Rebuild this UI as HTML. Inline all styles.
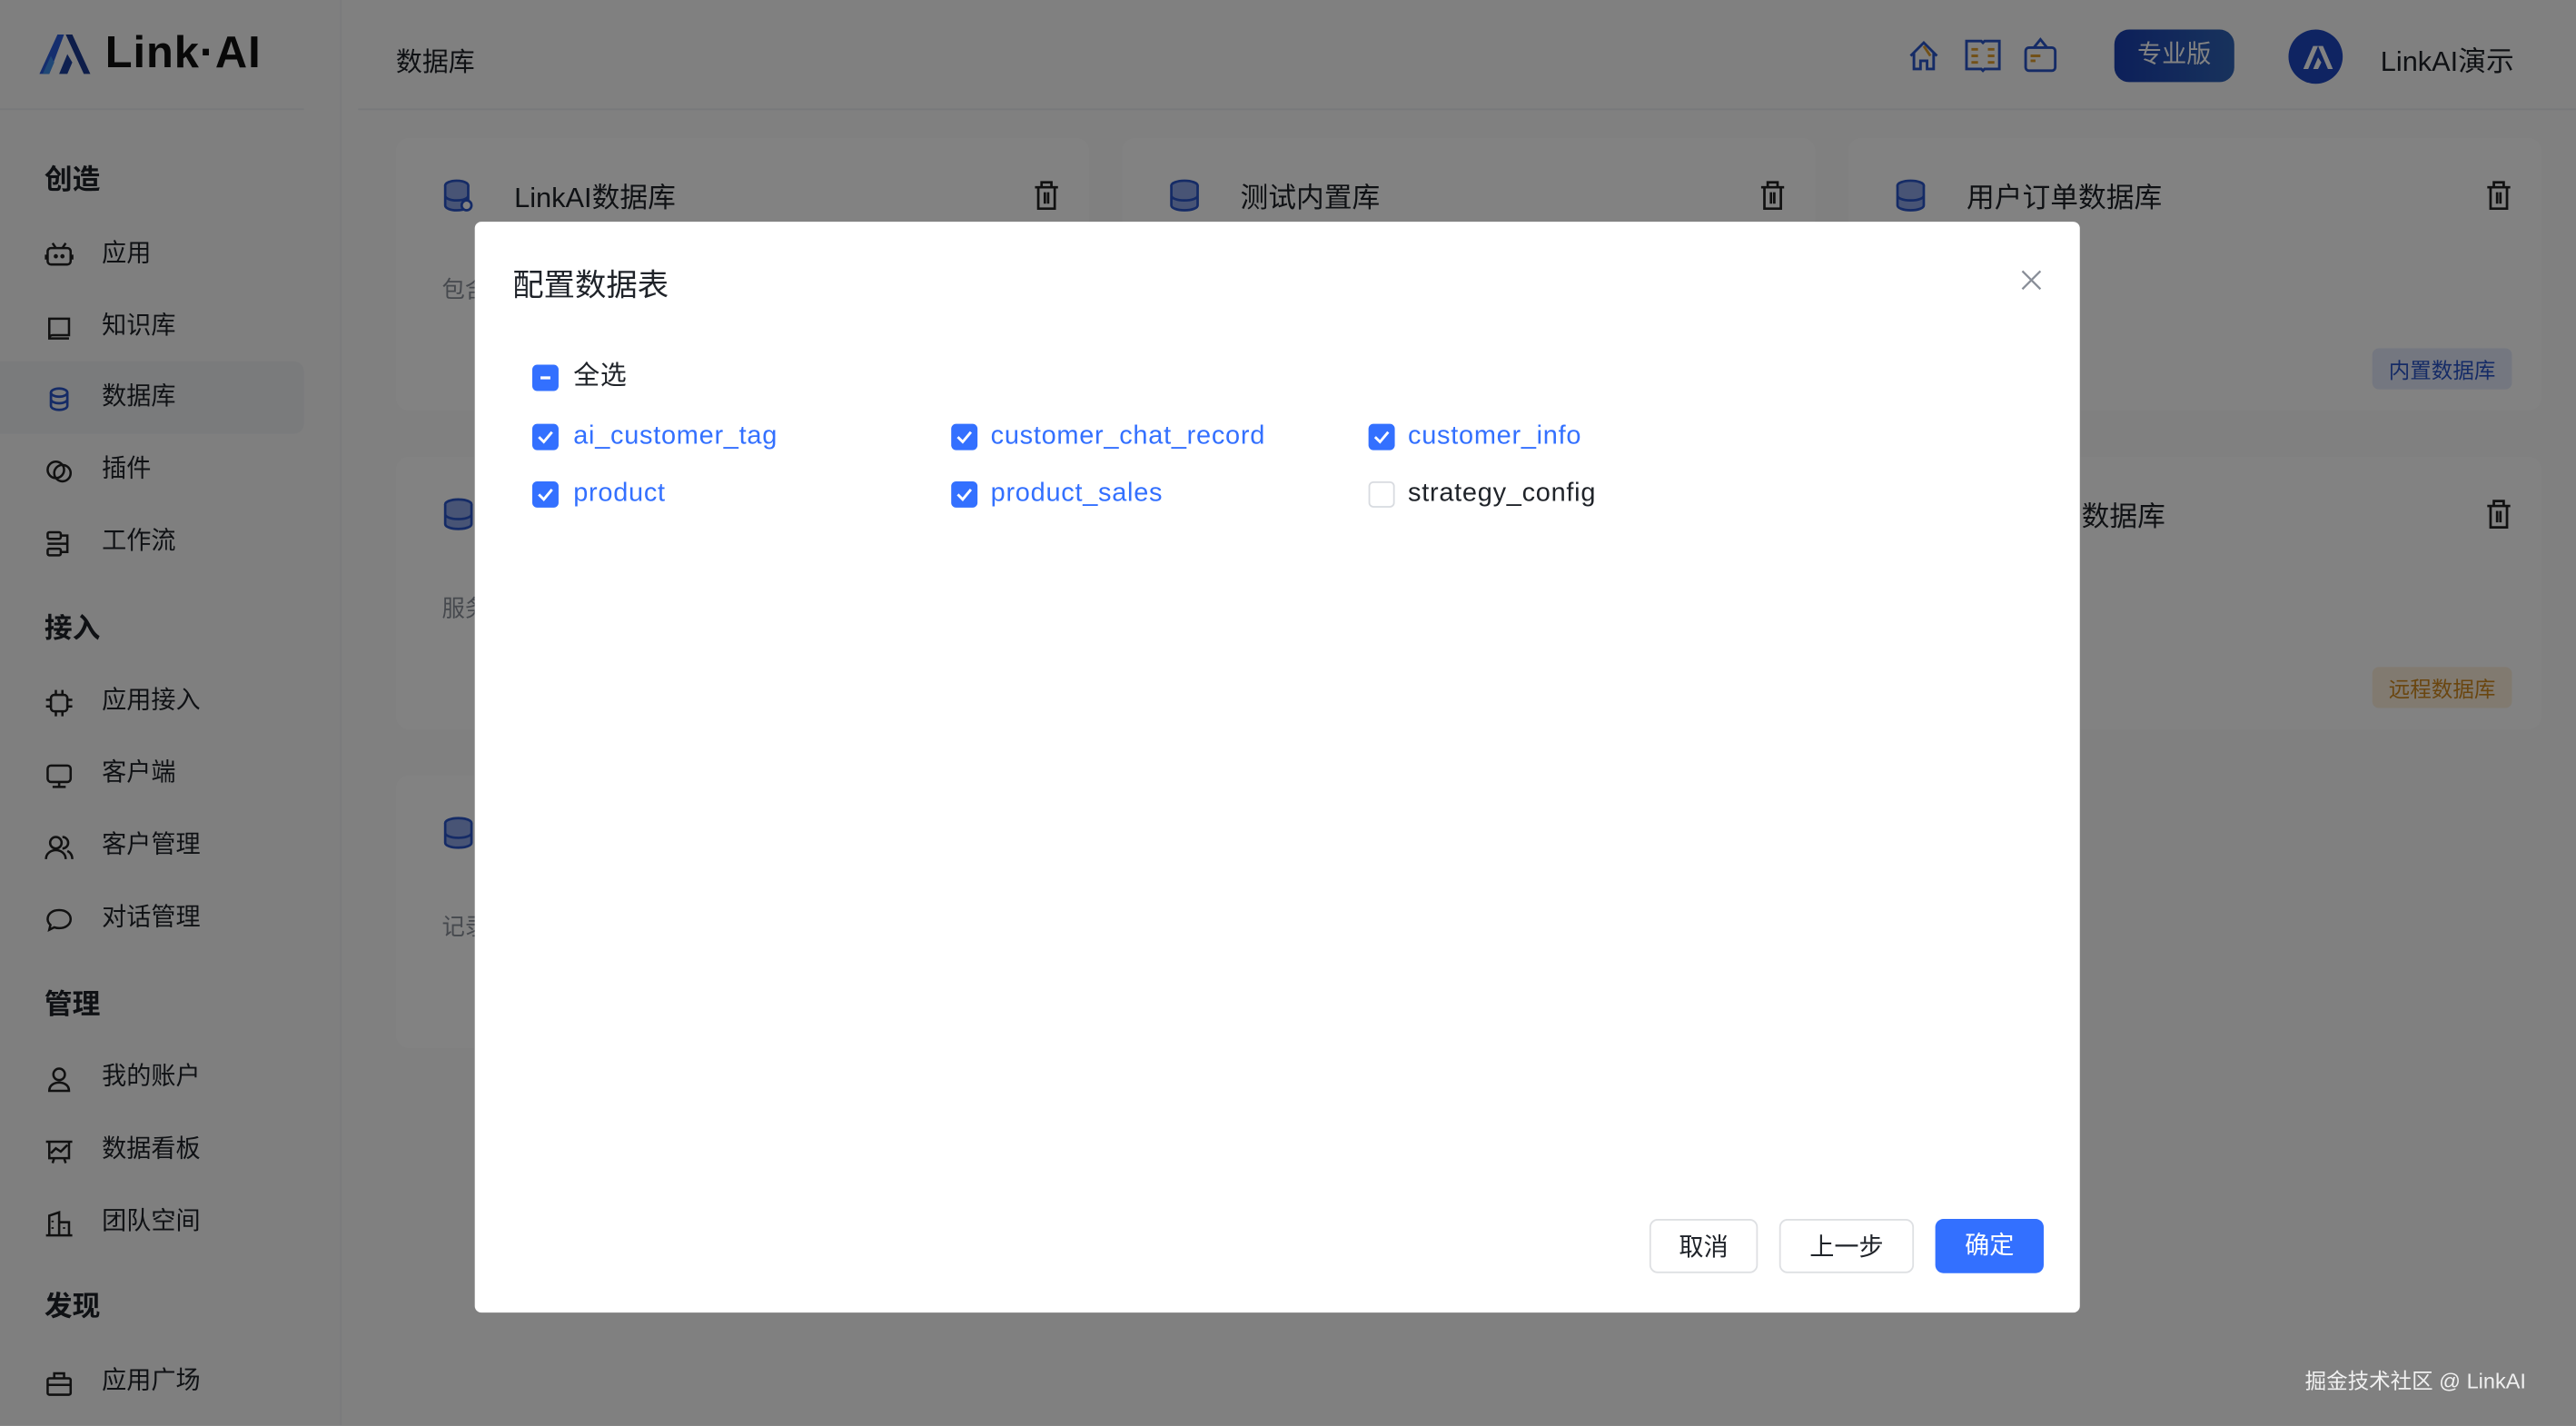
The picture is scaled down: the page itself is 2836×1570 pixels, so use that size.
<!DOCTYPE html>
<html><head><meta charset="utf-8"><style>
html,body{margin:0;padding:0;width:2836px;height:1570px;overflow:hidden;background:#7f7f7f}
#root{position:absolute;left:0;top:0;width:1568px;height:868px;transform:scale(1.80867);transform-origin:0 0;background:#fbfbfc;font-family:"Liberation Sans","Noto Sans CJK SC",sans-serif;color:#1f2329}
.abs{position:absolute}
.side{left:0;top:0;width:207px;height:868px;background:#f9f9fa;border-right:1px solid #f0f1f3}
.sec{position:absolute;left:27px;font-size:17px;font-weight:bold;color:#1f2329}
.it{position:absolute;left:27px;font-size:15px;color:#1f2329;height:20px;line-height:20px}
.it svg{position:absolute;left:0;top:2px}
.it span{position:absolute;left:35px;white-space:nowrap}
.card{position:absolute;background:#fff;border-radius:8px;width:422px;height:166px}
.ct{position:absolute;left:72px;top:22px;font-size:17px}
.cd{position:absolute;left:28px;top:82px;font-size:14px;color:#8a8f99}
.dbi{position:absolute;left:28px;top:24px}
.tr{position:absolute;right:18px;top:26px}
.tag{position:absolute;right:18px;top:128px;font-size:13px;padding:3px 10px;border-radius:4px}
.ov{left:0;top:0;width:1568px;height:868px;background:rgba(0,0,0,.49)}
.modal{left:289px;top:135px;width:977px;height:664px;background:#fff;border-radius:4px}
.cb{position:absolute;width:16px;height:16px;border-radius:3px;background:#3370ff}
.cb svg{position:absolute;left:0;top:0}
.lb{position:absolute;font-size:16px;letter-spacing:0.4px;color:#3370ff;white-space:nowrap;line-height:20px}
.btn{position:absolute;top:607px;height:33px;line-height:33px;text-align:center;font-size:15px;border-radius:5px;box-sizing:border-box}
</style></head><body><div id="root">

<div class="abs side">
 <svg class="abs" style="left:24px;top:20px" width="34" height="26" viewBox="0 0 34 26"><path d="M0 25 L11 1 L15 1 L6 25Z" fill="#2a5bd7"/><path d="M12 25 L17 13 L20 18 L17 25Z" fill="#1c3f9e"/><path d="M16 1 L20 1 L31 25 L27 25Z" fill="#1d3a8f"/><path d="M2 25 L7 14 L9 18 L6 25Z" fill="#3f8ee8"/></svg>
 <div class="abs" style="left:64px;top:17px;font-size:27px;font-weight:bold;letter-spacing:0.5px;color:#111">Link·AI</div>
 <div class="abs" style="left:0;top:66px;width:185px;height:1px;background:#eceef1"></div>
 <div class="sec" style="top:95px">创造</div>
 <div class="it" style="top:145px"><svg width="18" height="16" viewBox="0 0 18 16" fill="none" stroke="#222" stroke-width="1.4"><rect x="2" y="4" width="14" height="10" rx="2"/><path d="M5 1l2 3M13 1l-2 3M1 8v3M17 8v3"/><circle cx="7" cy="9" r=".6" fill="#222"/><circle cx="11" cy="9" r=".6" fill="#222"/></svg><span>应用</span></div>
 <div class="it" style="top:189px"><svg width="18" height="18" viewBox="0 0 18 18" fill="none" stroke="#222" stroke-width="1.4"><path d="M3 15V3h12v10H5a2 2 0 0 0-2 2h12"/></svg><span>知识库</span></div>
 <div class="abs" style="left:0;top:220px;width:185px;height:44px;background:#f0f1f4;border-radius:0 6px 6px 0"></div>
 <div class="it" style="top:232px"><svg width="18" height="18" viewBox="0 0 18 18" fill="none" stroke="#2a55c8" stroke-width="1.5"><ellipse cx="9" cy="5" rx="5" ry="2.5"/><path d="M4 5v8c0 1.4 2.2 2.5 5 2.5s5-1.1 5-2.5V5M4 9c0 1.4 2.2 2.5 5 2.5s5-1.1 5-2.5"/></svg><span>数据库</span></div>
 <div class="it" style="top:276px"><svg width="18" height="18" viewBox="0 0 18 18" fill="none" stroke="#222" stroke-width="1.4"><circle cx="7" cy="8" r="5"/><circle cx="11" cy="10" r="5"/></svg><span>插件</span></div>
 <div class="it" style="top:320px"><svg width="18" height="18" viewBox="0 0 18 18" fill="none" stroke="#222" stroke-width="1.4"><rect x="2" y="2" width="8" height="4" rx="1"/><rect x="2" y="12" width="8" height="4" rx="1"/><path d="M10 4h4v10h-4M2 9h12"/></svg><span>工作流</span></div>
 <div class="sec" style="top:368px">接入</div>
 <div class="it" style="top:417px"><svg width="18" height="18" viewBox="0 0 18 18" fill="none" stroke="#222" stroke-width="1.4"><rect x="4" y="4" width="10" height="10" rx="2"/><path d="M1 7h3M1 11h3M14 7h3M14 11h3M7 1v3M11 1v3M7 14v3M11 14v3"/></svg><span>应用接入</span></div>
 <div class="it" style="top:461px"><svg width="18" height="18" viewBox="0 0 18 18" fill="none" stroke="#222" stroke-width="1.4"><rect x="2" y="3" width="14" height="10" rx="2"/><path d="M9 13v3M5 16h8"/></svg><span>客户端</span></div>
 <div class="it" style="top:505px"><svg width="18" height="18" viewBox="0 0 18 18" fill="none" stroke="#222" stroke-width="1.4"><circle cx="7" cy="6" r="3.5"/><path d="M1 16c0-3.5 3-5.5 6-5.5s6 2 6 5.5M11 2.5a3.5 3.5 0 0 1 0 7M14 11c2 1 3 2.5 3 5"/></svg><span>客户管理</span></div>
 <div class="it" style="top:549px"><svg width="18" height="18" viewBox="0 0 18 18" fill="none" stroke="#222" stroke-width="1.4"><path d="M9 3c4.4 0 7 2.5 7 5.5S13.4 14 9 14c-1 0-2-.2-3-.5L3 15l.7-3C2.6 11 2 9.8 2 8.5 2 5.5 4.6 3 9 3z"/></svg><span>对话管理</span></div>
 <div class="sec" style="top:597px">管理</div>
 <div class="it" style="top:646px"><svg width="18" height="18" viewBox="0 0 18 18" fill="none" stroke="#222" stroke-width="1.4"><circle cx="9" cy="6" r="3.5"/><path d="M3 16c0-3.5 3-5 6-5s6 1.5 6 5z"/></svg><span>我的账户</span></div>
 <div class="it" style="top:690px"><svg width="18" height="18" viewBox="0 0 18 18" fill="none" stroke="#222" stroke-width="1.4"><path d="M1 3h16M3 3v10h12V3M4 10l3-3 3 2 4-4M6 13l-1 3M12 13l1 3"/></svg><span>数据看板</span></div>
 <div class="it" style="top:734px"><svg width="18" height="18" viewBox="0 0 18 18" fill="none" stroke="#222" stroke-width="1.4"><path d="M1 16h16M3 16V4l6-2v14M9 8h6v8M5 7v1M5 11v1M12 11v1"/></svg><span>团队空间</span></div>
 <div class="sec" style="top:781px">发现</div>
 <div class="it" style="top:831px"><svg width="18" height="18" viewBox="0 0 18 18" fill="none" stroke="#222" stroke-width="1.4"><rect x="2" y="6" width="14" height="10" rx="1"/><path d="M6 6V3h6v3M2 10h14"/></svg><span>应用广场</span></div>
</div>

<div class="abs" style="left:241px;top:24px;font-size:16px">数据库</div>
<svg class="abs" style="left:1160px;top:23px" width="22" height="22" viewBox="0 0 22 22" fill="none" stroke="#2a55c8" stroke-width="1.6"><path d="M3 11L11 3l8 8M5 9v10h4v-5h4v5h4V9"/><path d="M11 5l4 6" stroke="#e0a030"/></svg>
<svg class="abs" style="left:1195px;top:23px" width="24" height="22" viewBox="0 0 24 22" fill="none" stroke-width="1.6"><path d="M2 2h9l1 1 1-1h9v17h-9l-1 1-1-1H2z" stroke="#2a55c8"/><path d="M5 7h4M5 11h4M5 15h4M15 7h4M15 11h4M15 15h4" stroke="#e0a030"/></svg>
<svg class="abs" style="left:1231px;top:22px" width="22" height="24" viewBox="0 0 22 24" fill="none" stroke-width="1.6"><rect x="2" y="7" width="18" height="14" rx="2" stroke="#2a55c8"/><path d="M7 7l4-5 4 5" stroke="#2a55c8"/><path d="M5 12h6M5 15h3" stroke="#e0a030"/></svg>
<div class="abs" style="left:1287px;top:18px;width:73px;height:32px;border-radius:9px;background:linear-gradient(90deg,#1a3fb0,#2f63b5);color:#fff;font-size:15px;text-align:center;line-height:32px">专业版</div>
<div class="abs" style="left:1393px;top:18px;width:33px;height:33px;border-radius:50%;background:#1e47c0"><svg width="33" height="33" viewBox="0 0 33 33"><path d="M9 24L15 10h3L12 24z M15 24l3-7 2 3-2 4z M18 10h3l6 14h-3z" fill="#fff"/></svg></div>
<div class="abs" style="left:1449px;top:23px;font-size:17px">LinkAI演示</div>
<div class="abs" style="left:218px;top:66px;width:1350px;height:1px;background:#eceef1"></div>

<div class="card" style="left:241px;top:84px"><svg class="dbi" width="20" height="22" viewBox="0 0 20 22" fill="#8da6e6" stroke="#2a55c8" stroke-width="1.5"><ellipse cx="9" cy="5" rx="7" ry="3"/><path d="M2 5v12c0 1.7 3 3 7 3s7-1.3 7-3V5M2 11c0 1.7 3 3 7 3s7-1.3 7-3"/><circle cx="15" cy="17" r="3" fill="#fff"/></svg><div class="ct">LinkAI数据库</div><svg class="tr" width="16" height="18" viewBox="0 0 16 18" fill="none" stroke="#222" stroke-width="1.5"><path d="M1 4h14M5 4V1h6v3M3 4v13h10V4M7 7v7M9 7v7"/></svg><div class="cd">包含</div></div>
<div class="card" style="left:683px;top:84px"><svg class="dbi" width="20" height="22" viewBox="0 0 20 22" fill="#8da6e6" stroke="#2a55c8" stroke-width="1.5"><ellipse cx="10" cy="5" rx="8" ry="3"/><path d="M2 5v12c0 1.7 3.6 3 8 3s8-1.3 8-3V5M2 11c0 1.7 3.6 3 8 3s8-1.3 8-3"/></svg><div class="ct">测试内置库</div><svg class="tr" width="16" height="18" viewBox="0 0 16 18" fill="none" stroke="#222" stroke-width="1.5"><path d="M1 4h14M5 4V1h6v3M3 4v13h10V4M7 7v7M9 7v7"/></svg></div>
<div class="card" style="left:1125px;top:84px"><svg class="dbi" width="20" height="22" viewBox="0 0 20 22" fill="#8da6e6" stroke="#2a55c8" stroke-width="1.5"><ellipse cx="10" cy="5" rx="8" ry="3"/><path d="M2 5v12c0 1.7 3.6 3 8 3s8-1.3 8-3V5M2 11c0 1.7 3.6 3 8 3s8-1.3 8-3"/></svg><div class="ct">用户订单数据库</div><svg class="tr" width="16" height="18" viewBox="0 0 16 18" fill="none" stroke="#222" stroke-width="1.5"><path d="M1 4h14M5 4V1h6v3M3 4v13h10V4M7 7v7M9 7v7"/></svg><div class="cd">数据</div><div class="tag" style="background:#e3eafc;color:#2a55c8">内置数据库</div></div>
<div class="card" style="left:241px;top:278px"><svg class="dbi" width="20" height="22" viewBox="0 0 20 22" fill="#8da6e6" stroke="#2a55c8" stroke-width="1.5"><ellipse cx="10" cy="5" rx="8" ry="3"/><path d="M2 5v12c0 1.7 3.6 3 8 3s8-1.3 8-3V5M2 11c0 1.7 3.6 3 8 3s8-1.3 8-3"/></svg><div class="cd">服务</div></div>
<div class="card" style="left:683px;top:278px"></div>
<div class="card" style="left:1125px;top:278px"><div class="ct" style="left:142px">数据库</div><svg class="tr" width="16" height="18" viewBox="0 0 16 18" fill="none" stroke="#222" stroke-width="1.5"><path d="M1 4h14M5 4V1h6v3M3 4v13h10V4M7 7v7M9 7v7"/></svg><div class="tag" style="background:#fdf0dc;color:#d08a20">远程数据库</div></div>
<div class="card" style="left:241px;top:472px"><svg class="dbi" width="20" height="22" viewBox="0 0 20 22" fill="#8da6e6" stroke="#2a55c8" stroke-width="1.5"><ellipse cx="10" cy="5" rx="8" ry="3"/><path d="M2 5v12c0 1.7 3.6 3 8 3s8-1.3 8-3V5M2 11c0 1.7 3.6 3 8 3s8-1.3 8-3"/></svg><div class="cd">记录</div></div>

<div class="abs ov"></div>
<div class="abs" style="left:1403px;top:830px;font-size:13px;color:#f0f0f0">掘金技术社区 @ LinkAI</div>

<div class="abs modal">
 <div class="abs" style="left:23px;top:24px;font-size:19px;color:#1f2329">配置数据表</div>
 <svg class="abs" style="left:941px;top:29px" width="13" height="13" viewBox="0 0 13 13" stroke="#8a8f99" stroke-width="1.3"><path d="M1 1l11 11M12 1L1 12"/></svg>
 <div class="cb" style="left:35px;top:87px"><svg width="16" height="16"><path d="M5 8h6" stroke="#fff" stroke-width="1.8"/></svg></div><div class="lb" style="left:60px;top:85px;color:#1f2329">全选</div>
 <div class="cb" style="left:35px;top:123px"><svg width="16" height="16"><path d="M4 8l3 3 5-6" stroke="#fff" stroke-width="1.6" fill="none"/></svg></div><div class="lb" style="left:60px;top:121px">ai_customer_tag</div>
 <div class="cb" style="left:290px;top:123px"><svg width="16" height="16"><path d="M4 8l3 3 5-6" stroke="#fff" stroke-width="1.6" fill="none"/></svg></div><div class="lb" style="left:314px;top:121px">customer_chat_record</div>
 <div class="cb" style="left:544px;top:123px"><svg width="16" height="16"><path d="M4 8l3 3 5-6" stroke="#fff" stroke-width="1.6" fill="none"/></svg></div><div class="lb" style="left:568px;top:121px">customer_info</div>
 <div class="cb" style="left:35px;top:158px"><svg width="16" height="16"><path d="M4 8l3 3 5-6" stroke="#fff" stroke-width="1.6" fill="none"/></svg></div><div class="lb" style="left:60px;top:156px">product</div>
 <div class="cb" style="left:290px;top:158px"><svg width="16" height="16"><path d="M4 8l3 3 5-6" stroke="#fff" stroke-width="1.6" fill="none"/></svg></div><div class="lb" style="left:314px;top:156px">product_sales</div>
 <div class="cb" style="left:544px;top:158px;background:#fff;border:1px solid #d8dbe0;box-sizing:border-box"></div><div class="lb" style="left:568px;top:156px;color:#1f2329">strategy_config</div>
 <div class="btn" style="left:715px;width:66px;border:1px solid #dee0e3;color:#1f2329">取消</div>
 <div class="btn" style="left:794px;width:82px;border:1px solid #dee0e3;color:#1f2329">上一步</div>
 <div class="btn" style="left:889px;width:66px;background:#3370ff;color:#fff">确定</div>
</div>
</div></body></html>
